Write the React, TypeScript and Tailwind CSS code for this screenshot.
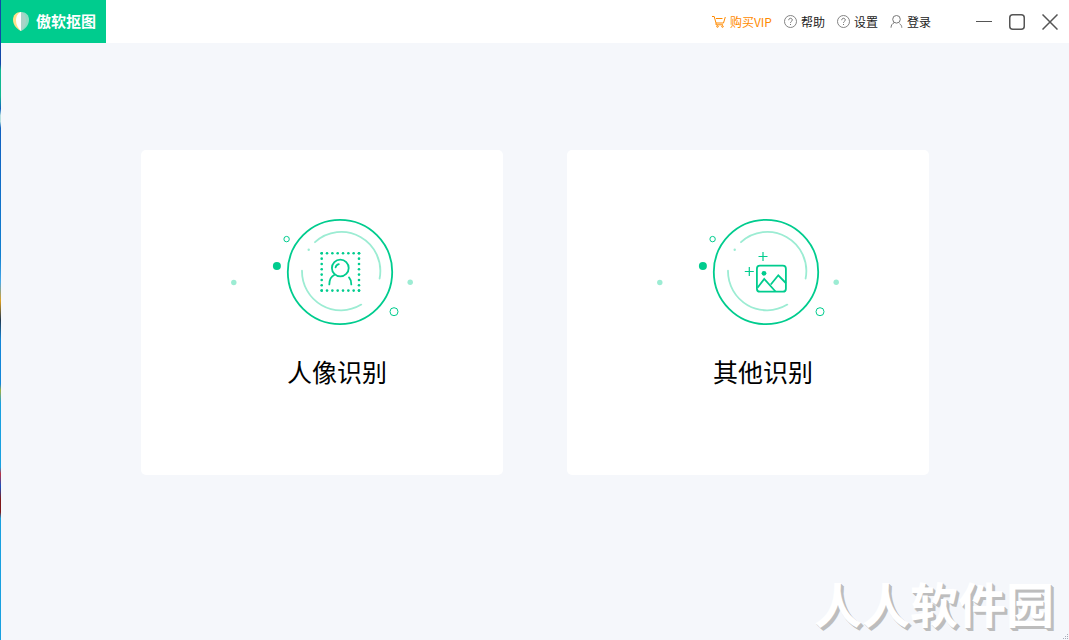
import type { ReactNode } from "react";

const GREEN = "#00cc8e";
const PALE = "#9cecd3";

const Logo = () => (
  <svg width="18" height="21" viewBox="0 0 18 21" aria-hidden="true">
    <path d="M9 1C4 1 1 4 1 9c0 5 4 9 8 11z" fill="#ffe08c" />
    <path d="M9 1c5 0 8 3 8 8 0 5-4 9-8 11z" fill="#8fdcc3" />
    <path d="M9 1C6 2 4 5 4 9.5c0 4 2 8 5 10.5z" fill="#fff" />
    <path d="M9 1c3 1 5 4 5 8.5 0 4-2 8-5 10.5z" fill="#a9d3c8" />
  </svg>
);

const CartIcon = () => (
  <svg width="14" height="13" viewBox="0 0 14 13" fill="none" stroke="currentColor" aria-hidden="true">
    <path d="M0 1.5h2.2l1.8 6.5h7.5L13.3 2M4 3.5h6.5M4 8v1.8h7" />
    <circle cx="5.500" cy="11.500" r="0.800" />
    <circle cx="10.500" cy="11.500" r="0.800" />
  </svg>
);

const QuestionIcon = () => (
  <svg width="13" height="13" viewBox="0 0 13 13" fill="none" stroke="#777" aria-hidden="true">
    <circle cx="6.5" cy="6.5" r="6" strokeWidth="0.9" />
    <path d="M4.7 5.2C4.7 2.6 8.3 2.7 8.3 5c0 1.3-1.8 1.4-1.8 2.800" />
    <path d="M6.500 9v1" />
  </svg>
);

const UserIcon = () => (
  <svg width="13" height="13" viewBox="0 0 13 13" fill="none" stroke="#777" aria-hidden="true">
    <circle cx="6.5" cy="4.3" r="3.8" />
    <path d="M4.5 7.5C2.3 8.5 1 10.3 1 12.7M9.5 8.7c1.5.8 2.3 2.2 2.3 4" />
  </svg>
);

const menu = [
  { label: "购买VIP", icon: <CartIcon />, className: "text-[#ff8a00]" },
  { label: "帮助", icon: <QuestionIcon />, className: "text-[#222]" },
  { label: "设置", icon: <QuestionIcon />, className: "text-[#222]" },
  { label: "登录", icon: <UserIcon />, className: "text-[#222]" },
];

const windowButtons = [
  { label: "最小化", shape: <path d="M0 7.5h16" strokeWidth="1" /> },
  { label: "最大化", shape: <rect x="0.75" y="0.75" width="14.5" height="14.5" rx="3" /> },
  { label: "关闭", shape: <path d="M0.5 0.5l15 15M15.5 0.5l-15 15" /> },
];

const steps = [0, 1, 2, 3, 4, 5, 6, 7].map((i) => i * 5.33);

const PortraitShape = () => (
  <>
    <g fill={GREEN}>
      {steps.map((s) => (
        <g key={s}>
          <circle cx={91.7 + s} cy="38.3" r="1.3" />
          <circle cx={91.7 + s} cy="75.6" r="1.3" />
          <circle cx="91.7" cy={38.3 + s} r="1.3" />
          <circle cx="129" cy={38.3 + s} r="1.3" />
        </g>
      ))}
    </g>
    <g stroke={GREEN} strokeWidth="1.8" strokeLinecap="round">
      <circle cx="110.3" cy="53" r="8.4" />
      <path d="M105.6 52.4C105.9 50.6 107 49.5 108.8 49.1" />
      <path d="M99.3 69.4C99.3 65 101 61.4 104.6 59.7" />
      <path d="M119 62.4C120.5 64 121.3 66.5 121.3 69.4" />
    </g>
  </>
);

const ImageShape = () => (
  <g stroke={GREEN} strokeWidth="1.8">
    <rect x="100.9" y="50.7" width="29" height="26" rx="3" />
    <circle cx="108" cy="58.3" r="2.4" fill={GREEN} stroke="none" />
    <path d="M101.5 72.8L108.2 64L119.5 76.5M114.8 69.5L122.3 60.3L129.8 68" />
    <path d="M107 37v9M102.5 41.5h9M93.3 52v9M88.8 56.5h9" strokeWidth="1.2" />
  </g>
);

const Illustration = ({ children }: { children: ReactNode }) => (
  <svg width="184" height="113" viewBox="0 0 184 113" fill="none" aria-hidden="true">
    <circle cx="110" cy="57" r="52.200" stroke={GREEN} strokeWidth="1.8" />
    <g stroke={PALE} strokeWidth="1.8" strokeLinecap="round">
      <path d="M85 27.2A39 39 0 0 1 149.6 63.5" />
      <path d="M72 55.7A39 39 0 0 0 131.3 89.6" />
    </g>
    <g fill={PALE}>
      <circle cx="3.8" cy="67.5" r="2.7" />
      <circle cx="180.2" cy="67.2" r="2.7" />
      <circle cx="78.7" cy="34.8" r="1.2" />
    </g>
    <circle cx="46.9" cy="51" r="4" fill={GREEN} />
    <g stroke={GREEN}>
      <circle cx="56.6" cy="24.1" r="2.700" />
      <circle cx="164" cy="96.7" r="4" />
    </g>
    {children}
  </svg>
);

const modes = [
  { label: "人像识别", shape: <PortraitShape /> },
  { label: "其他识别", shape: <ImageShape /> },
];

const Header = () => (
  <header className="flex items-center justify-between bg-white pr-[11px]">
    <div className="flex h-[43px] items-center gap-1.5 bg-[#00cc8e] pr-2.5 pl-[11px] text-[15px] font-bold text-white">
      <Logo />
      <h1>傲软抠图</h1>
    </div>
    <div className="flex items-center gap-[45px]">
      <nav className="flex items-center gap-3 text-xs">
        {menu.map((item) => (
          <button key={item.label} type="button" className={`flex items-center gap-1 ${item.className}`}>
            {item.icon}
            {item.label}
          </button>
        ))}
      </nav>
      <div className="flex items-center gap-[17px]">
        {windowButtons.map((button) => (
          <button key={button.label} type="button" aria-label={button.label}>
            <svg width="16" height="16" viewBox="0 0 16 16" fill="none" stroke="#555" strokeWidth="1.5">
              {button.shape}
            </svg>
          </button>
        ))}
      </div>
    </div>
  </header>
);

export default function App() {
  return (
    <div className="relative flex min-h-screen bg-[#f5f7fb] font-['Noto_Sans_CJK_SC',sans-serif]">
      {/* sliver of the desktop behind the window */}
      <div className="w-px bg-[linear-gradient(#1248a8_0_10%,#10b890_11%_15%,#1060c0_17%,#b8e0e0_18%_19%,#1060c0_20%,#1080d0_40%,#48a8e8_44%,#e0a020_47%,#203850_50%,#1286d8_53%_60%,#a0b040_61%,#18a0e0_63%_73%,#c03040_74%,#1850c0_76%,#801818_78%_80%,#18a0e0_81%)]" />
      <div className="flex flex-1 flex-col">
        <Header />
        <main className="flex gap-16 px-[140px] pt-[107px]">
          {modes.map((mode) => (
            <button
              key={mode.label}
              type="button"
              className="flex flex-1 flex-col items-center rounded-[5px] bg-white pt-[65px] pb-[85px]"
            >
              <Illustration>{mode.shape}</Illustration>
              <span className="mt-6 pl-[30px] text-[25px] leading-[38px] text-black">{mode.label}</span>
            </button>
          ))}
        </main>
      </div>
      <div className="absolute right-[15px] bottom-1 text-[48px] leading-[68px] font-bold text-white [text-shadow:1px_1px_0_#bdbdbd,2px_2px_0_#bdbdbd,3px_3px_0_#bdbdbd]">
        人人软件园
      </div>
      <svg className="absolute right-0 bottom-0" width="6" height="6" viewBox="0 0 6 6" fill="#a9adb8" aria-hidden="true">
        <path d="M4 0h1v1h-1zM2 2h1v1h-1zM4 2h1v1h-1zM0 4h1v1h-1zM2 4h1v1h-1zM4 4h1v1h-1z" />
      </svg>
    </div>
  );
}
